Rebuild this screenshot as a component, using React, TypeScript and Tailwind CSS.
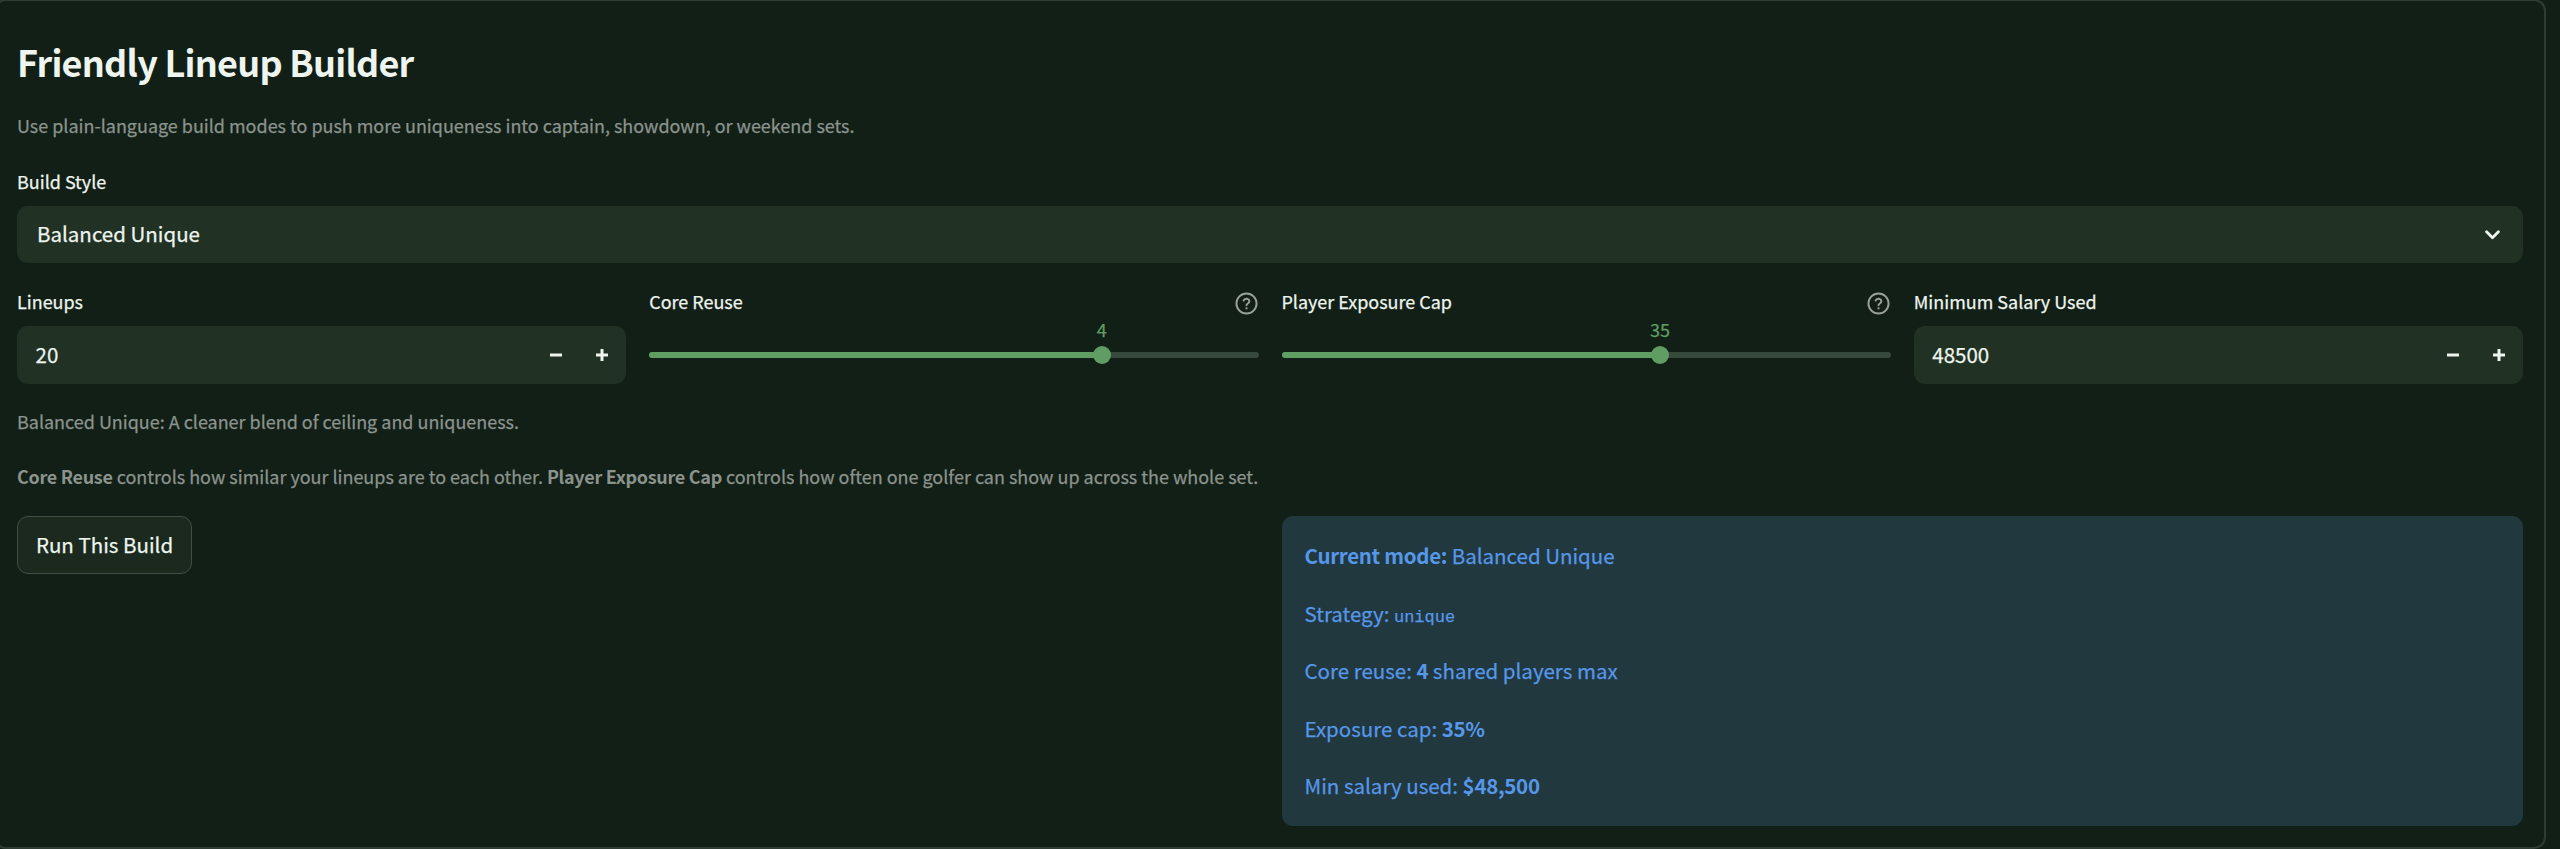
import { useState } from "react";

interface NumberFieldProps {
    label: string;
    value: number;
    step?: number;
    onChange: (value: number) => void;
}

interface SliderFieldProps {
    label: string;
    value: number;
    min: number;
    max: number;
}

const labelClass = "text-[17.97px] leading-7 text-[#edf5ee]";
const captionClass = "text-[17.97px] leading-7 text-[#8b938d]";
const strongClass = "font-bold tracking-[-0.015em] [-webkit-text-stroke:0px]";

const HelpIcon = () => (
    <svg
        className="mr-px h-[23px] w-[23px] text-[#98a19a]"
        viewBox="0 0 24 24"
        fill="none"
        stroke="currentColor"
        strokeWidth="2"
        strokeLinecap="round"
        strokeLinejoin="round"
    >
        <circle cx="12" cy="12" r="10.5" />
        <path d="M9 9a3.1 3.1 0 0 1 6 .9c0 2-3 2.2-3 3.9" />
        <path d="M12 17h.01" strokeWidth="2.4" />
    </svg>
);

const NumberField = ({ label, value, step = 1, onChange }: NumberFieldProps) => (
    <div>
        <div className={labelClass}>{label}</div>
        <div className="mt-[11px] flex h-[58px] items-center rounded-[11px] bg-[#213124] pr-[1px]">
            <span className="flex-1 pb-[3px] pl-[18.5px] text-[20.5px] leading-8 text-[#edf5ee]">{value}</span>
            <button
                type="button"
                aria-label={`Decrease ${label}`}
                onClick={() => onChange(value - step)}
                className="flex h-full w-[46px] items-center justify-center text-[#edf5ee]"
            >
                <svg className="h-3 w-3" viewBox="0 0 12 12" stroke="currentColor" strokeWidth="3">
                    <path d="M0 6h12" />
                </svg>
            </button>
            <button
                type="button"
                aria-label={`Increase ${label}`}
                onClick={() => onChange(value + step)}
                className="flex h-full w-[46px] items-center justify-center text-[#edf5ee]"
            >
                <svg className="h-3 w-3" viewBox="0 0 12 12" stroke="currentColor" strokeWidth="3">
                    <path d="M0 6h12M6 0v12" />
                </svg>
            </button>
        </div>
    </div>
);

const SliderField = ({ label, value, min, max }: SliderFieldProps) => {
    const percent = ((value - min) / (max - min)) * 100;

    return (
        <div>
            <div className="flex items-center justify-between">
                <span className={labelClass}>{label}</span>
                <span className="pt-[4px]">
                    <HelpIcon />
                </span>
            </div>
            <div className="mt-[37px] h-[6px] rounded-full bg-[#37493c]">
                <div className="relative mx-[9px] h-full">
                    <div
                        className="absolute -left-[9px] top-0 h-full rounded-l-full bg-[#609d63]"
                        style={{ width: `calc(${percent}% + 9px)` }}
                    />
                    <div
                        className="absolute -top-[6px] h-[18px] w-[18px] -translate-x-1/2 rounded-full bg-[#609d63]"
                        style={{ left: `${percent}%` }}
                    />
                    <span
                        className="absolute -top-[37px] -translate-x-1/2 text-[17.97px] leading-7 text-[#609d63]"
                        style={{ left: `${percent}%` }}
                    >
                        {value}
                    </span>
                </div>
            </div>
        </div>
    );
};

export default function App() {
    const [lineups, setLineups] = useState<number>(20);
    const [minSalary, setMinSalary] = useState<number>(48500);
    const coreReuse = 4;
    const exposureCap = 35;

    return (
        <div className="h-[849px] w-[2560px] overflow-hidden bg-[#121f16] font-['Noto_Sans_CJK_SC','Noto_Sans',sans-serif] [-webkit-text-stroke:0.25px]">
            <div className="-ml-[6px] -mt-px h-[850px] w-[2552px] rounded-[12px] border-2 border-[#2f3c33] pl-[21px] pr-[21px] pt-[36px]">
                <h2 className="text-[36px] leading-[48px] font-bold tracking-[-0.75px] text-[#edf5ee] [-webkit-text-stroke:0px]">
                    Friendly Lineup Builder
                </h2>
                <p className={`mt-[26px] ${captionClass}`}>
                    Use plain-language build modes to push more uniqueness into captain, showdown, or weekend sets.
                </p>

                <div className={`mt-7 ${labelClass}`}>Build Style</div>
                <div className="mt-[11px] flex h-[57px] items-center justify-between rounded-[11px] bg-[#213124] pl-5 pr-[23px] text-[#edf5ee]">
                    <span className="pb-[3px] text-[20.5px] leading-8">Balanced Unique</span>
                    <svg
                        className="h-[10px] w-[15px]"
                        viewBox="0 0 15 10"
                        fill="none"
                        stroke="currentColor"
                        strokeWidth="2.8"
                        strokeLinecap="round"
                        strokeLinejoin="round"
                    >
                        <path d="M1.6 1.8 7.5 7.8l5.9-6" />
                    </svg>
                </div>

                <div className="mt-6 grid grid-cols-4 gap-[23px]">
                    <NumberField label="Lineups" value={lineups} onChange={setLineups} />
                    <SliderField label="Core Reuse" value={coreReuse} min={1} max={5} />
                    <SliderField label="Player Exposure Cap" value={exposureCap} min={10} max={50} />
                    <NumberField label="Minimum Salary Used" value={minSalary} step={100} onChange={setMinSalary} />
                </div>

                <p className={`mt-[23px] ${captionClass}`}>Balanced Unique: A cleaner blend of ceiling and uniqueness.</p>
                <p className={`mt-[27px] ${captionClass}`}>
                    <strong className={strongClass}>Core Reuse</strong> controls how similar your lineups are to each
                    other. <strong className={strongClass}>Player Exposure Cap</strong> controls how often one golfer
                    can show up across the whole set.
                </p>

                <div className="mt-[26px] grid grid-cols-2 items-start gap-[23px]">
                    <div>
                        <button
                            type="button"
                            className="h-[58px] w-[175px] rounded-[11px] border border-[#414e45] bg-[#1b291e] pb-[3px] text-[20.5px] leading-8 whitespace-nowrap text-[#edf5ee]"
                        >
                            Run This Build
                        </button>
                    </div>
                    <div className="flex h-[310px] flex-col gap-[25.5px] rounded-[11px] bg-[#21383f] px-[23px] pt-[23px] text-[20.5px] leading-8 text-[#5797e8]">
                        <p className="h-8">
                            <strong className={strongClass}>Current mode:</strong> Balanced Unique
                        </p>
                        <p className="h-8">
                            Strategy:{" "}
                            <code className="font-['Liberation_Mono',monospace] text-[17px] leading-none">unique</code>
                        </p>
                        <p className="h-8">
                            Core reuse: <strong className={strongClass}>{coreReuse}</strong> shared players max
                        </p>
                        <p className="h-8">
                            Exposure cap: <strong className={strongClass}>{exposureCap}%</strong>
                        </p>
                        <p className="h-8">
                            Min salary used:{" "}
                            <strong className={strongClass}>${minSalary.toLocaleString("en-US")}</strong>
                        </p>
                    </div>
                </div>
            </div>
        </div>
    );
}
